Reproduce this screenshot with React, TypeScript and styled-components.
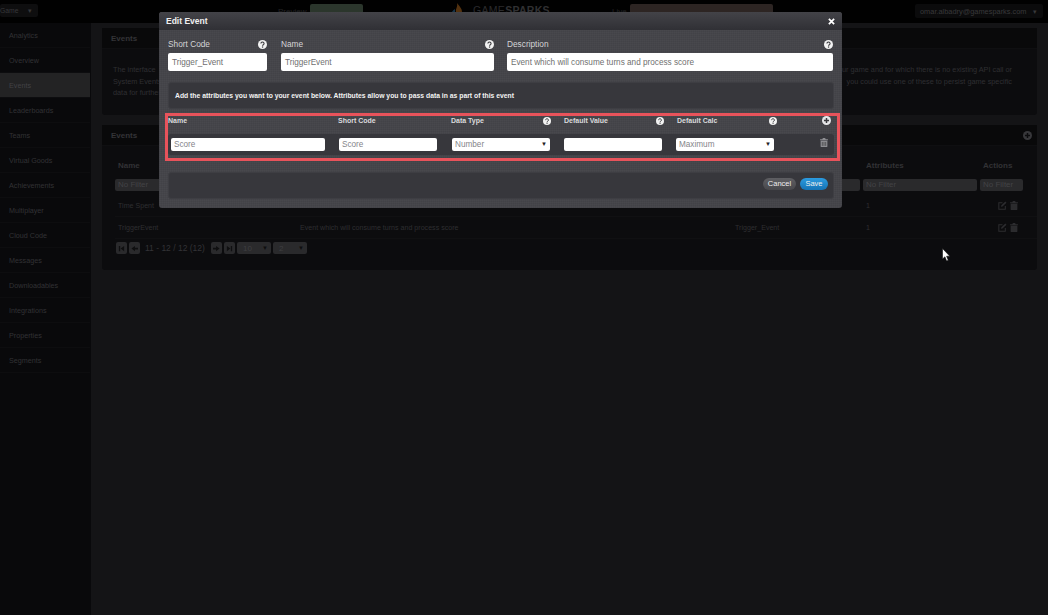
import React from 'react';

import styled, { createGlobalStyle } from 'styled-components';

const GlobalStyle = createGlobalStyle`
  html, body {
    margin: 0;
    height: 100%;
    background: #141416;
    overflow: hidden;
  }

  * {
    box-sizing: border-box;
  }

  #root {
    font-family: 'Liberation Sans', Arial, sans-serif;
    font-size: 8px;
  }
`;

const Page = styled.div`
  position: relative;
  width: 1048px;
  height: 615px;
  display: flex;
  flex-direction: column;
  overflow: hidden;
`;

const TopBar = styled.header`
  height: 23px;
  flex: none;
  background: #010101;
  display: flex;
  align-items: flex-start;
  padding-top: 4px;
`;

const GameSelect = styled.div`
  width: 38px;
  height: 13px;
  margin-right: 240px;
  padding-right: 6px;
  background: #0e0e0f;
  border-radius: 2px;
  display: flex;
  align-items: center;
  justify-content: space-between;
  color: #37373a;
  font-size: 6.8px;
`;

const EnvLabel = styled.span<{ $width: number }>`
  width: ${({ $width }) => $width}px;
  padding-top: 3px;
  font-size: 8px;
  color: #232325;
`;

const EnvButton = styled.div<{ $width: number; $tone: string }>`
  width: ${({ $width }) => $width}px;
  height: 13px;
  background: ${({ $tone }) => $tone};
  border-radius: 2px;
`;

const Logo = styled.div`
  width: 100px;
  margin: -1px 62px 0 87px;
  display: flex;
  align-items: center;
  gap: 8px;
  font-size: 10.5px;
  letter-spacing: 0.3px;
  white-space: nowrap;
  color: #2a2a2c;

  svg {
    flex: none;
  }
`;

const LogoBold = styled.b`
  color: #303032;
`;

const UserMenu = styled.div`
  width: 128px;
  height: 14px;
  margin-left: auto;
  margin-right: 5px;
  padding: 0 6px 0 5px;
  background: #0b0b0c;
  border-radius: 2px;
  display: flex;
  align-items: center;
  justify-content: space-between;
  color: #39393b;
  font-size: 7.4px;
`;

const Body = styled.div`
  flex: 1;
  display: flex;
`;

const Sidebar = styled.nav`
  width: 91px;
  flex: none;
  background: #09090b;
`;

const NavItem = styled.div<{ $active?: boolean }>`
  height: 25px;
  margin-right: 1px;
  padding-left: 9px;
  display: flex;
  align-items: center;
  color: ${({ $active }) => ($active ? '#424244' : '#323235')};
  background: ${({ $active }) => ($active ? '#232324' : 'transparent')};
  border-bottom: 1px solid #0d0d0f;
  font-size: 7.2px;
`;

const Main = styled.main`
  flex: 1;
  padding: 5px 11px 0;
  display: flex;
  flex-direction: column;
  gap: 10px;
`;

const Panel = styled.section<{ $height: number }>`
  height: ${({ $height }) => $height}px;
  background: #0c0c0e;
  border-radius: 3px;
`;

const PanelHeader = styled.div`
  height: 21px;
  padding: 0 5px 0 9px;
  background: #09090a;
  border-bottom: 1px solid #0f0f11;
  display: flex;
  align-items: center;
  justify-content: space-between;
  color: #343437;
  font-size: 8px;
  font-weight: 700;
`;

const Intro = styled.div`
  width: 910px;
  padding: 15px 0 0 11px;
  color: #2f2f32;
  font-size: 7.3px;
  line-height: 11.5px;
`;

const IntroLine = styled.div`
  display: flex;
  justify-content: space-between;
`;

const TableWrap = styled.div`
  padding: 10px 0 0 13px;
`;

const TableRow = styled.div<{ $height: number; $ruled?: boolean }>`
  display: grid;
  grid-template-columns: 182px 435px 131px 117px 46px;
  height: ${({ $height }) => $height}px;
  align-items: center;
  border-bottom: 1px solid ${({ $ruled }) => ($ruled ? '#101012' : 'transparent')};
  color: #2e2e31;
  font-size: 7.1px;
`;

const HeadCell = styled.div`
  padding-left: 3px;
  font-size: 8px;
  font-weight: 700;
  color: #323235;
`;

const FilterBox = styled.div`
  height: 12px;
  margin-right: 3px;
  padding-left: 3px;
  background: #2a2a2c;
  border-radius: 2px;
  color: #434346;
  font-size: 8px;
  line-height: 12px;
`;

const Cell = styled.div`
  padding-left: 3px;
`;

const ActionIcons = styled.div`
  display: flex;
  gap: 3px;
  padding-left: 18px;
  color: #2c2c2f;
`;

const Pager = styled.div`
  display: flex;
  align-items: center;
  gap: 2px;
  margin-top: 3px;
  padding-left: 1px;
  color: #333336;
  font-size: 8px;
`;

const PagerButton = styled.div`
  width: 11px;
  height: 12px;
  border-radius: 2px;
  background: #2a2a2c;
  color: #0f0f10;
  display: flex;
  align-items: center;
  justify-content: center;
`;

const PagerText = styled.span`
  width: 62px;
  margin: 0 2px 0 3px;
  font-size: 8.5px;
`;

const PagerSelect = styled.div`
  width: 34px;
  height: 12px;
  padding: 0 3px 0 6px;
  border-radius: 2px;
  background: #2a2a2c;
  color: #3e3e41;
  display: flex;
  align-items: center;
  justify-content: space-between;
  font-size: 8px;
`;

const PagerCaret = styled.span`
  color: #0e0e0f;
  font-size: 6px;
`;

const Modal = styled.div`
  position: absolute;
  left: 159px;
  top: 12px;
  width: 683px;
  height: 196px;
  border-radius: 3px;
  background-color: #48484d;
  background-image:
    repeating-linear-gradient(0deg, rgba(0, 0, 0, 0.04) 0 1px, transparent 1px 2px),
    repeating-linear-gradient(90deg, rgba(0, 0, 0, 0.04) 0 1px, transparent 1px 2px);
  color: #e2e2e4;
`;

const ModalHeader = styled.div`
  height: 18px;
  padding: 0 7px;
  display: flex;
  align-items: center;
  justify-content: space-between;
  background: linear-gradient(#434348, #303035);
  border-radius: 3px 3px 0 0;
  font-size: 8.5px;
  font-weight: 700;
  color: #f0f0f0;
`;

const CloseIcon = styled.svg`
  display: block;
`;

const FieldRow = styled.div`
  display: flex;
  height: 51px;
  padding: 7px 9px 0;
`;

const Field = styled.div<{ $width: number; $gap: number }>`
  width: ${({ $width }) => $width}px;
  margin-right: ${({ $gap }) => $gap}px;
`;

const FieldHead = styled.div`
  height: 14px;
  display: flex;
  align-items: center;
  justify-content: space-between;
  color: #d4d4d6;
  font-size: 8.3px;
`;

const TextInput = styled.div`
  height: 18px;
  margin-top: 2px;
  padding-left: 4px;
  background: #fff;
  border-radius: 2px;
  color: #6f6f6f;
  font-size: 8.2px;
  line-height: 19px;
`;

const InfoWell = styled.div`
  height: 27px;
  margin: 1px 8px 0 9px;
  padding-left: 6px;
  display: flex;
  align-items: center;
  background: #37373c;
  border: 1px solid #3e3e43;
  border-radius: 3px;
  font-size: 6.8px;
  font-weight: 700;
  color: #f2f2f2;
`;

const AttributeBox = styled.div`
  height: 48px;
  margin: 4px 2px 0 6px;
  padding: 0 3px 0 0;
  border: 3px solid #e8535b;
`;

const AttributeHead = styled.div`
  height: 18px;
  padding-bottom: 10px;
  display: grid;
  grid-template-columns: 170px 113px 113px 113px 113px 1fr;
  align-items: center;
`;

const AttributeLabel = styled.div`
  display: flex;
  align-items: center;
  justify-content: space-between;
  padding-right: 13px;
  font-size: 7px;
  font-weight: 700;
  color: #dadadc;
`;

const AddSlot = styled.div`
  display: flex;
  justify-content: flex-end;
  padding-right: 3px;
`;

const AttributeRow = styled.div`
  height: 21px;
  display: grid;
  grid-template-columns: 170px 113px 113px 113px 113px 1fr;
  align-items: center;
  background: #37373c;
  border-radius: 3px;
`;

const RowInput = styled.div<{ $width: number; $offset?: number }>`
  width: ${({ $width }) => $width}px;
  height: 13px;
  margin-left: ${({ $offset }) => $offset ?? 0}px;
  padding: 0 3px;
  background: #fff;
  border-radius: 2px;
  color: #85858a;
  font-size: 8.2px;
  line-height: 13px;
  display: flex;
  align-items: center;
  justify-content: space-between;
`;

const SelectCaret = styled.span`
  color: #222;
  font-size: 6px;
`;

const TrashSlot = styled.div`
  display: flex;
  justify-content: flex-end;
  padding-right: 6px;
  margin-top: -4px;
  color: #8e8e92;
`;

const FooterWell = styled.div`
  height: 27px;
  margin: 11px 8px 0 9px;
  padding: 0 5px 4px 0;
  display: flex;
  align-items: center;
  justify-content: flex-end;
  gap: 4px;
  background: #37373c;
  border: 1px solid #3e3e43;
  border-radius: 3px;
`;

const ModalButton = styled.div<{ $primary?: boolean }>`
  width: ${({ $primary }) => ($primary ? 28 : 33)}px;
  height: 12px;
  border-radius: 6px;
  background: ${({ $primary }) =>
    $primary ? 'linear-gradient(#2b9be0, #1573b5)' : 'linear-gradient(#5e5e62, #48484c)'};
  color: #eee;
  font-size: 7.5px;
  line-height: 12px;
  text-align: center;
`;

const Cursor = styled.svg`
  position: absolute;
  left: 942px;
  top: 248px;
`;

const HelpIcon = ({ size }: { size: number }) => (
  <svg width={size} height={size} viewBox="0 0 16 16">
    <circle cx="8" cy="8" r="8" fill="#f2f2f2" />
    <path d="M5.2 6.2a2.8 2.6 0 1 1 4.4 2.1c-1 .7-1.5 1-1.5 2" fill="none" stroke="#3a3a3e" strokeWidth="2" />
    <rect x="7" y="11.4" width="2.2" height="2.2" fill="#3a3a3e" />
  </svg>
);

const PlusIcon = ({ color, mark }: { color: string; mark: string }) => (
  <svg width="9" height="9" viewBox="0 0 16 16">
    <circle cx="8" cy="8" r="8" fill={color} />
    <path d="M8 3.5v9M3.5 8h9" stroke={mark} strokeWidth="2.6" />
  </svg>
);

const TrashIcon = ({ size }: { size: number }) => (
  <svg width={size - 1} height={size} viewBox="0 0 14 16" fill="currentColor">
    <path d="M5 0h4l1 2h4v2H0V2h4zM1 5h12v9.5a1.5 1.5 0 0 1-1.5 1.5h-9A1.5 1.5 0 0 1 1 14.5z" />
    <path d="M4 7v7M7 7v7M10 7v7" stroke="#2a2a2c" strokeWidth="1" />
  </svg>
);

const EditIcon = () => (
  <svg width="9" height="9" viewBox="0 0 16 16" fill="none" stroke="currentColor" strokeWidth="1.8">
    <path d="M13 9v5.5H1.5V3H8" />
    <path d="M6 7.5 13 1l2 2-7 6.8-2.6.6z" fill="currentColor" stroke="none" />
  </svg>
);

const PagerArrow = ({ flip, stop }: { flip?: boolean; stop?: boolean }) => (
  <svg width="7" height="7" viewBox="0 0 8 8" fill="currentColor">
    <g transform={flip ? 'matrix(-1 0 0 1 8 0)' : undefined}>
      {stop ? (
        <path d="M1 1h1.5v6H1zM7 1v6L3 4z" />
      ) : (
        <path d="M4.5 1v2H8v2H4.5v2L.5 4z" />
      )}
    </g>
  </svg>
);

const navItems = [
  'Analytics',
  'Overview',
  'Events',
  'Leaderboards',
  'Teams',
  'Virtual Goods',
  'Achievements',
  'Multiplayer',
  'Cloud Code',
  'Messages',
  'Downloadables',
  'Integrations',
  'Properties',
  'Segments',
];

const eventRows = [
  { name: 'Time Spent', description: '', code: '' },
  {
    name: 'TriggerEvent',
    description: 'Event which will consume turns and process score',
    code: 'Trigger_Event',
  },
];

const App = () => (
  <Page>
    <GlobalStyle />
    <TopBar>
      <GameSelect>
        <span>Game</span>
        <span>▾</span>
      </GameSelect>
      <EnvLabel $width={32}>Preview</EnvLabel>
      <EnvButton $width={53} $tone="#2b362c" />
      <Logo>
        <svg width="15" height="14" viewBox="0 0 15 14">
          <path d="M7 0c2 3 5 5 5 9H6C5 6 8 4 7 0z" fill="#54320f" />
          <path d="M1 13C1 9 3 7 5 6c0 3 0 5 1 7z" fill="#153348" />
        </svg>
        <span>
          GAME<LogoBold>SPARKS</LogoBold>
        </span>
      </Logo>
      <EnvLabel $width={18}>Live</EnvLabel>
      <EnvButton $width={143} $tone="#2d2523" />
      <UserMenu>
        <span>omar.albadry@gamesparks.com</span>
        <span>▾</span>
      </UserMenu>
    </TopBar>
    <Body>
      <Sidebar>
        {navItems.map((item) => (
          <NavItem key={item} $active={item === 'Events'}>
            {item}
          </NavItem>
        ))}
      </Sidebar>
      <Main>
        <Panel $height={87}>
          <PanelHeader>Events</PanelHeader>
          <Intro>
            <IntroLine>
              <span>The interface</span>
              <span>your game and for which there is no existing API call or</span>
            </IntroLine>
            <IntroLine>
              <span>System Events</span>
              <span>you could use one of these to persist game specific</span>
            </IntroLine>
            <IntroLine>
              <span>data for further</span>
            </IntroLine>
          </Intro>
        </Panel>
        <Panel $height={145}>
          <PanelHeader>
            Events
            <PlusIcon color="#38383b" mark="#0c0c0e" />
          </PanelHeader>
          <TableWrap>
            <TableRow $height={19}>
              <HeadCell>Name</HeadCell>
              <HeadCell>Description</HeadCell>
              <HeadCell>Short Code</HeadCell>
              <HeadCell>Attributes</HeadCell>
              <HeadCell>Actions</HeadCell>
            </TableRow>
            <TableRow $height={20}>
              <FilterBox>No Filter</FilterBox>
              <FilterBox>No Filter</FilterBox>
              <FilterBox>No Filter</FilterBox>
              <FilterBox>No Filter</FilterBox>
              <FilterBox>No Filter</FilterBox>
            </TableRow>
            {eventRows.map((row) => (
              <TableRow key={row.name} $height={22} $ruled>
                <Cell>{row.name}</Cell>
                <Cell>{row.description}</Cell>
                <Cell>{row.code}</Cell>
                <Cell>1</Cell>
                <ActionIcons>
                  <EditIcon />
                  <TrashIcon size={9} />
                </ActionIcons>
              </TableRow>
            ))}
            <Pager>
              <PagerButton>
                <PagerArrow stop />
              </PagerButton>
              <PagerButton>
                <PagerArrow />
              </PagerButton>
              <PagerText>11 - 12 / 12 (12)</PagerText>
              <PagerButton>
                <PagerArrow flip />
              </PagerButton>
              <PagerButton>
                <PagerArrow flip stop />
              </PagerButton>
              <PagerSelect>
                10
                <PagerCaret>▼</PagerCaret>
              </PagerSelect>
              <PagerSelect>
                2
                <PagerCaret>▼</PagerCaret>
              </PagerSelect>
            </Pager>
          </TableWrap>
        </Panel>
      </Main>
    </Body>
    <Cursor width="9" height="14" viewBox="0 0 9 14">
      <path d="M0.5 0.5v10.5l2.4-2.2 1.7 4.2 1.7-.7-1.7-4.1h3.2z" fill="#fff" stroke="#111" strokeWidth="0.6" />
    </Cursor>
    <Modal>
      <ModalHeader>
        Edit Event
        <CloseIcon width="7" height="7" viewBox="0 0 8 8">
          <path d="M1 1l6 6M7 1l-6 6" stroke="#fff" strokeWidth="2" />
        </CloseIcon>
      </ModalHeader>
      <FieldRow>
        <Field $width={99} $gap={14}>
          <FieldHead>
            Short Code
            <HelpIcon size={9} />
          </FieldHead>
          <TextInput>Trigger_Event</TextInput>
        </Field>
        <Field $width={213} $gap={13}>
          <FieldHead>
            Name
            <HelpIcon size={9} />
          </FieldHead>
          <TextInput>TriggerEvent</TextInput>
        </Field>
        <Field $width={326} $gap={0}>
          <FieldHead>
            Description
            <HelpIcon size={9} />
          </FieldHead>
          <TextInput>Event which will consume turns and process score</TextInput>
        </Field>
      </FieldRow>
      <InfoWell>
        Add the attributes you want to your event below. Attributes allow you to pass data in as part of this event
      </InfoWell>
      <AttributeBox>
        <AttributeHead>
          <AttributeLabel>Name</AttributeLabel>
          <AttributeLabel>Short Code</AttributeLabel>
          <AttributeLabel>
            Data Type
            <HelpIcon size={8} />
          </AttributeLabel>
          <AttributeLabel>
            Default Value
            <HelpIcon size={8} />
          </AttributeLabel>
          <AttributeLabel>
            Default Calc
            <HelpIcon size={8} />
          </AttributeLabel>
          <AddSlot>
            <PlusIcon color="#e6e6e8" mark="#3a3a3e" />
          </AddSlot>
        </AttributeHead>
        <AttributeRow>
          <RowInput $width={154} $offset={3}>
            Score
          </RowInput>
          <RowInput $width={98} $offset={1}>
            Score
          </RowInput>
          <RowInput $width={98} $offset={1}>
            Number
            <SelectCaret>▼</SelectCaret>
          </RowInput>
          <RowInput $width={98} />
          <RowInput $width={98} $offset={-1}>
            Maximum
            <SelectCaret>▼</SelectCaret>
          </RowInput>
          <TrashSlot>
            <TrashIcon size={9} />
          </TrashSlot>
        </AttributeRow>
      </AttributeBox>
      <FooterWell>
        <ModalButton>Cancel</ModalButton>
        <ModalButton $primary>Save</ModalButton>
      </FooterWell>
    </Modal>
  </Page>
);

export default App;
